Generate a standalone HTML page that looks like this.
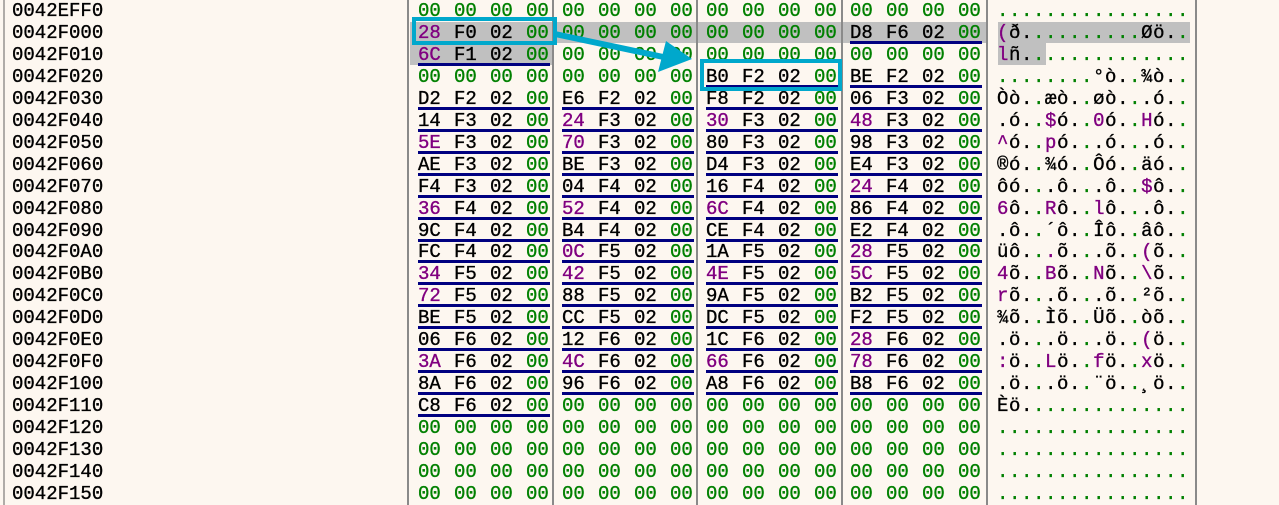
<!DOCTYPE html>
<html><head><meta charset="utf-8"><style>
html,body{margin:0;padding:0}
body{width:1279px;height:505px;background:#fdf7f0;position:relative;overflow:hidden;font-family:"Liberation Mono",monospace;font-size:19px;color:#000;-webkit-text-stroke:0.35px}
.r{position:absolute;left:0;width:1279px;height:22px;line-height:22px}
.a{position:absolute;left:12px;top:0}
.h{position:absolute;left:418px;top:0;display:flex}
.h i{font-style:normal;width:36px;display:block}
.g{color:#008000}.p{color:#800080}
.s{position:absolute;left:997px;top:0;letter-spacing:0.6px;white-space:pre}
.s u{text-decoration:none;color:#008000}
.s em{font-style:normal;color:#800080}
.ul{position:absolute;top:19px;height:3px;width:132px;background:#000080}
.vl{position:absolute;top:0;height:505px;width:2px;background:#8a8a8a}
.hl{position:absolute;background:#c0c0c0}
.box{position:absolute;border:4px solid #00a8cc;box-sizing:border-box}
</style></head><body>
<div class="hl" style="left:410px;top:22px;width:780px;height:21px"></div>
<div class="hl" style="left:410px;top:43px;width:144px;height:22px"></div>
<div class="hl" style="left:998px;top:43px;width:48px;height:22px"></div>
<div class="hl" style="left:987px;top:22px;width:11px;height:21px;background:#fdf7f0"></div>
<div class="vl" style="left:3px;background:#b0aca8"></div>
<div class="vl" style="left:407px"></div>
<div class="vl" style="left:552px"></div>
<div class="vl" style="left:696px"></div>
<div class="vl" style="left:841px"></div>
<div class="vl" style="left:986px"></div>
<div class="vl" style="left:1195px"></div>

<div class="r" style="top:0"><span class="a">0042EFF0</span><div class="h"><i class=g>00</i><i class=g>00</i><i class=g>00</i><i class=g>00</i><i class=g>00</i><i class=g>00</i><i class=g>00</i><i class=g>00</i><i class=g>00</i><i class=g>00</i><i class=g>00</i><i class=g>00</i><i class=g>00</i><i class=g>00</i><i class=g>00</i><i class=g>00</i></div><span class="s"><u>................</u></span></div>

<div class="r" style="top:22px"><span class="a">0042F000</span><div class="ul" style="left:850px"></div><div class="h"><i class=p>28</i><i>F0</i><i>02</i><i class=g>00</i><i class=g>00</i><i class=g>00</i><i class=g>00</i><i class=g>00</i><i class=g>00</i><i class=g>00</i><i class=g>00</i><i class=g>00</i><i>D8</i><i>F6</i><i>02</i><i class=g>00</i></div><span class="s"><em>(</em>ð.<u>.........</u>Øö.<u>.</u></span></div>

<div class="r" style="top:44px"><span class="a">0042F010</span><div class="ul" style="left:418px"></div><div class="h"><i class=p>6C</i><i>F1</i><i>02</i><i class=g>00</i><i class=g>00</i><i class=g>00</i><i class=g>00</i><i class=g>00</i><i class=g>00</i><i class=g>00</i><i class=g>00</i><i class=g>00</i><i class=g>00</i><i class=g>00</i><i class=g>00</i><i class=g>00</i></div><span class="s"><em>l</em>ñ.<u>.............</u></span></div>

<div class="r" style="top:66px"><span class="a">0042F020</span><div class="ul" style="left:706px"></div><div class="ul" style="left:850px"></div><div class="h"><i class=g>00</i><i class=g>00</i><i class=g>00</i><i class=g>00</i><i class=g>00</i><i class=g>00</i><i class=g>00</i><i class=g>00</i><i>B0</i><i>F2</i><i>02</i><i class=g>00</i><i>BE</i><i>F2</i><i>02</i><i class=g>00</i></div><span class="s"><u>........</u>°ò.<u>.</u>¾ò.<u>.</u></span></div>

<div class="r" style="top:88px"><span class="a">0042F030</span><div class="ul" style="left:418px"></div><div class="ul" style="left:562px"></div><div class="ul" style="left:706px"></div><div class="ul" style="left:850px"></div><div class="h"><i>D2</i><i>F2</i><i>02</i><i class=g>00</i><i>E6</i><i>F2</i><i>02</i><i class=g>00</i><i>F8</i><i>F2</i><i>02</i><i class=g>00</i><i>06</i><i>F3</i><i>02</i><i class=g>00</i></div><span class="s">Òò.<u>.</u>æò.<u>.</u>øò.<u>.</u>.ó.<u>.</u></span></div>

<div class="r" style="top:110px"><span class="a">0042F040</span><div class="ul" style="left:418px"></div><div class="ul" style="left:562px"></div><div class="ul" style="left:706px"></div><div class="ul" style="left:850px"></div><div class="h"><i>14</i><i>F3</i><i>02</i><i class=g>00</i><i class=p>24</i><i>F3</i><i>02</i><i class=g>00</i><i class=p>30</i><i>F3</i><i>02</i><i class=g>00</i><i class=p>48</i><i>F3</i><i>02</i><i class=g>00</i></div><span class="s">.ó.<u>.</u><em>$</em>ó.<u>.</u><em>0</em>ó.<u>.</u><em>H</em>ó.<u>.</u></span></div>

<div class="r" style="top:132px"><span class="a">0042F050</span><div class="ul" style="left:418px"></div><div class="ul" style="left:562px"></div><div class="ul" style="left:706px"></div><div class="ul" style="left:850px"></div><div class="h"><i class=p>5E</i><i>F3</i><i>02</i><i class=g>00</i><i class=p>70</i><i>F3</i><i>02</i><i class=g>00</i><i>80</i><i>F3</i><i>02</i><i class=g>00</i><i>98</i><i>F3</i><i>02</i><i class=g>00</i></div><span class="s"><em>^</em>ó.<u>.</u><em>p</em>ó.<u>.</u>.ó.<u>.</u>.ó.<u>.</u></span></div>

<div class="r" style="top:154px"><span class="a">0042F060</span><div class="ul" style="left:418px"></div><div class="ul" style="left:562px"></div><div class="ul" style="left:706px"></div><div class="ul" style="left:850px"></div><div class="h"><i>AE</i><i>F3</i><i>02</i><i class=g>00</i><i>BE</i><i>F3</i><i>02</i><i class=g>00</i><i>D4</i><i>F3</i><i>02</i><i class=g>00</i><i>E4</i><i>F3</i><i>02</i><i class=g>00</i></div><span class="s">®ó.<u>.</u>¾ó.<u>.</u>Ôó.<u>.</u>äó.<u>.</u></span></div>

<div class="r" style="top:176px"><span class="a">0042F070</span><div class="ul" style="left:418px"></div><div class="ul" style="left:562px"></div><div class="ul" style="left:706px"></div><div class="ul" style="left:850px"></div><div class="h"><i>F4</i><i>F3</i><i>02</i><i class=g>00</i><i>04</i><i>F4</i><i>02</i><i class=g>00</i><i>16</i><i>F4</i><i>02</i><i class=g>00</i><i class=p>24</i><i>F4</i><i>02</i><i class=g>00</i></div><span class="s">ôó.<u>.</u>.ô.<u>.</u>.ô.<u>.</u><em>$</em>ô.<u>.</u></span></div>

<div class="r" style="top:198px"><span class="a">0042F080</span><div class="ul" style="left:418px"></div><div class="ul" style="left:562px"></div><div class="ul" style="left:706px"></div><div class="ul" style="left:850px"></div><div class="h"><i class=p>36</i><i>F4</i><i>02</i><i class=g>00</i><i class=p>52</i><i>F4</i><i>02</i><i class=g>00</i><i class=p>6C</i><i>F4</i><i>02</i><i class=g>00</i><i>86</i><i>F4</i><i>02</i><i class=g>00</i></div><span class="s"><em>6</em>ô.<u>.</u><em>R</em>ô.<u>.</u><em>l</em>ô.<u>.</u>.ô.<u>.</u></span></div>

<div class="r" style="top:220px"><span class="a">0042F090</span><div class="ul" style="left:418px"></div><div class="ul" style="left:562px"></div><div class="ul" style="left:706px"></div><div class="ul" style="left:850px"></div><div class="h"><i>9C</i><i>F4</i><i>02</i><i class=g>00</i><i>B4</i><i>F4</i><i>02</i><i class=g>00</i><i>CE</i><i>F4</i><i>02</i><i class=g>00</i><i>E2</i><i>F4</i><i>02</i><i class=g>00</i></div><span class="s">.ô.<u>.</u>´ô.<u>.</u>Îô.<u>.</u>âô.<u>.</u></span></div>

<div class="r" style="top:241px"><span class="a">0042F0A0</span><div class="ul" style="left:418px"></div><div class="ul" style="left:562px"></div><div class="ul" style="left:706px"></div><div class="ul" style="left:850px"></div><div class="h"><i>FC</i><i>F4</i><i>02</i><i class=g>00</i><i class=p>0C</i><i>F5</i><i>02</i><i class=g>00</i><i>1A</i><i>F5</i><i>02</i><i class=g>00</i><i class=p>28</i><i>F5</i><i>02</i><i class=g>00</i></div><span class="s">üô.<u>.</u><em>.</em>õ.<u>.</u>.õ.<u>.</u><em>(</em>õ.<u>.</u></span></div>

<div class="r" style="top:263px"><span class="a">0042F0B0</span><div class="ul" style="left:418px"></div><div class="ul" style="left:562px"></div><div class="ul" style="left:706px"></div><div class="ul" style="left:850px"></div><div class="h"><i class=p>34</i><i>F5</i><i>02</i><i class=g>00</i><i class=p>42</i><i>F5</i><i>02</i><i class=g>00</i><i class=p>4E</i><i>F5</i><i>02</i><i class=g>00</i><i class=p>5C</i><i>F5</i><i>02</i><i class=g>00</i></div><span class="s"><em>4</em>õ.<u>.</u><em>B</em>õ.<u>.</u><em>N</em>õ.<u>.</u><em>\</em>õ.<u>.</u></span></div>

<div class="r" style="top:285px"><span class="a">0042F0C0</span><div class="ul" style="left:418px"></div><div class="ul" style="left:562px"></div><div class="ul" style="left:706px"></div><div class="ul" style="left:850px"></div><div class="h"><i class=p>72</i><i>F5</i><i>02</i><i class=g>00</i><i>88</i><i>F5</i><i>02</i><i class=g>00</i><i>9A</i><i>F5</i><i>02</i><i class=g>00</i><i>B2</i><i>F5</i><i>02</i><i class=g>00</i></div><span class="s"><em>r</em>õ.<u>.</u>.õ.<u>.</u>.õ.<u>.</u>²õ.<u>.</u></span></div>

<div class="r" style="top:307px"><span class="a">0042F0D0</span><div class="ul" style="left:418px"></div><div class="ul" style="left:562px"></div><div class="ul" style="left:706px"></div><div class="ul" style="left:850px"></div><div class="h"><i>BE</i><i>F5</i><i>02</i><i class=g>00</i><i>CC</i><i>F5</i><i>02</i><i class=g>00</i><i>DC</i><i>F5</i><i>02</i><i class=g>00</i><i>F2</i><i>F5</i><i>02</i><i class=g>00</i></div><span class="s">¾õ.<u>.</u>Ìõ.<u>.</u>Üõ.<u>.</u>òõ.<u>.</u></span></div>

<div class="r" style="top:329px"><span class="a">0042F0E0</span><div class="ul" style="left:418px"></div><div class="ul" style="left:562px"></div><div class="ul" style="left:706px"></div><div class="ul" style="left:850px"></div><div class="h"><i>06</i><i>F6</i><i>02</i><i class=g>00</i><i>12</i><i>F6</i><i>02</i><i class=g>00</i><i>1C</i><i>F6</i><i>02</i><i class=g>00</i><i class=p>28</i><i>F6</i><i>02</i><i class=g>00</i></div><span class="s">.ö.<u>.</u>.ö.<u>.</u>.ö.<u>.</u><em>(</em>ö.<u>.</u></span></div>

<div class="r" style="top:351px"><span class="a">0042F0F0</span><div class="ul" style="left:418px"></div><div class="ul" style="left:562px"></div><div class="ul" style="left:706px"></div><div class="ul" style="left:850px"></div><div class="h"><i class=p>3A</i><i>F6</i><i>02</i><i class=g>00</i><i class=p>4C</i><i>F6</i><i>02</i><i class=g>00</i><i class=p>66</i><i>F6</i><i>02</i><i class=g>00</i><i class=p>78</i><i>F6</i><i>02</i><i class=g>00</i></div><span class="s"><em>:</em>ö.<u>.</u><em>L</em>ö.<u>.</u><em>f</em>ö.<u>.</u><em>x</em>ö.<u>.</u></span></div>

<div class="r" style="top:373px"><span class="a">0042F100</span><div class="ul" style="left:418px"></div><div class="ul" style="left:562px"></div><div class="ul" style="left:706px"></div><div class="ul" style="left:850px"></div><div class="h"><i>8A</i><i>F6</i><i>02</i><i class=g>00</i><i>96</i><i>F6</i><i>02</i><i class=g>00</i><i>A8</i><i>F6</i><i>02</i><i class=g>00</i><i>B8</i><i>F6</i><i>02</i><i class=g>00</i></div><span class="s">.ö.<u>.</u>.ö.<u>.</u>¨ö.<u>.</u>¸ö.<u>.</u></span></div>

<div class="r" style="top:395px"><span class="a">0042F110</span><div class="ul" style="left:418px"></div><div class="h"><i>C8</i><i>F6</i><i>02</i><i class=g>00</i><i class=g>00</i><i class=g>00</i><i class=g>00</i><i class=g>00</i><i class=g>00</i><i class=g>00</i><i class=g>00</i><i class=g>00</i><i class=g>00</i><i class=g>00</i><i class=g>00</i><i class=g>00</i></div><span class="s">Èö.<u>.............</u></span></div>

<div class="r" style="top:417px"><span class="a">0042F120</span><div class="h"><i class=g>00</i><i class=g>00</i><i class=g>00</i><i class=g>00</i><i class=g>00</i><i class=g>00</i><i class=g>00</i><i class=g>00</i><i class=g>00</i><i class=g>00</i><i class=g>00</i><i class=g>00</i><i class=g>00</i><i class=g>00</i><i class=g>00</i><i class=g>00</i></div><span class="s"><u>................</u></span></div>

<div class="r" style="top:439px"><span class="a">0042F130</span><div class="h"><i class=g>00</i><i class=g>00</i><i class=g>00</i><i class=g>00</i><i class=g>00</i><i class=g>00</i><i class=g>00</i><i class=g>00</i><i class=g>00</i><i class=g>00</i><i class=g>00</i><i class=g>00</i><i class=g>00</i><i class=g>00</i><i class=g>00</i><i class=g>00</i></div><span class="s"><u>................</u></span></div>

<div class="r" style="top:461px"><span class="a">0042F140</span><div class="h"><i class=g>00</i><i class=g>00</i><i class=g>00</i><i class=g>00</i><i class=g>00</i><i class=g>00</i><i class=g>00</i><i class=g>00</i><i class=g>00</i><i class=g>00</i><i class=g>00</i><i class=g>00</i><i class=g>00</i><i class=g>00</i><i class=g>00</i><i class=g>00</i></div><span class="s"><u>................</u></span></div>

<div class="r" style="top:483px"><span class="a">0042F150</span><div class="h"><i class=g>00</i><i class=g>00</i><i class=g>00</i><i class=g>00</i><i class=g>00</i><i class=g>00</i><i class=g>00</i><i class=g>00</i><i class=g>00</i><i class=g>00</i><i class=g>00</i><i class=g>00</i><i class=g>00</i><i class=g>00</i><i class=g>00</i><i class=g>00</i></div><span class="s"><u>................</u></span></div>

<div class="box" style="left:412px;top:17px;width:145px;height:28px"></div>
<div class="box" style="left:700px;top:59px;width:142px;height:32px"></div>
<svg style="position:absolute;left:0;top:0" width="1279" height="505">
<line x1="555" y1="34" x2="668" y2="58" stroke="#00a8cc" stroke-width="6"/>
<polygon points="666,41 692,59 658,72" fill="#00a8cc"/>
</svg>
</body></html>
